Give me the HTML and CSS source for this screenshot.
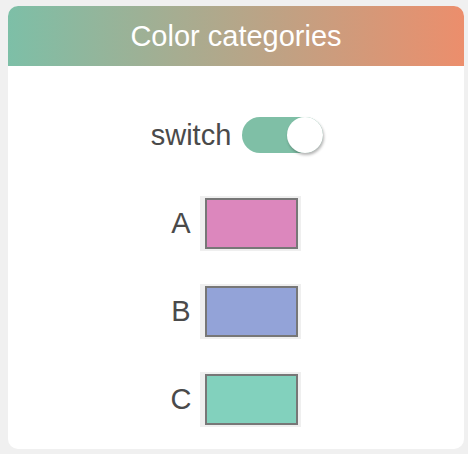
FILE: index.html
```html
<!DOCTYPE html>
<html lang="en">
<head>
<meta charset="utf-8">
<title>Color categories</title>
<link rel="stylesheet" href="styles.css">
</head>
<body>
<div class="card">
  <div class="card-header">Color categories</div>
  <div class="card-body">
    <div class="row switch-row">
      <span class="label">switch</span>
      <span class="toggle"><span class="knob"></span></span>
    </div>
    <div class="row color-row">
      <span class="label">A</span>
      <span class="color-input"><span class="swatch swatch-a"></span></span>
    </div>
    <div class="row color-row">
      <span class="label">B</span>
      <span class="color-input"><span class="swatch swatch-b"></span></span>
    </div>
    <div class="row color-row">
      <span class="label">C</span>
      <span class="color-input"><span class="swatch swatch-c"></span></span>
    </div>
  </div>
</div>
</body>
</html>
```
FILE: styles.css
```css
html, body {
  margin: 0;
  padding: 0;
  background: #f0f0f0;
}
body {
  padding: 6px 4px 5px 8px;
  font-family: "Liberation Sans", Arial, sans-serif;
}
.card {
  width: 456px;
  background: #ffffff;
  border-radius: 10px;
  overflow: hidden;
}
.card-header {
  height: 60px;
  line-height: 60px;
  text-align: center;
  color: #ffffff;
  font-size: 29px;
  background: linear-gradient(to right, #7dbfa7, #ec8e6c);
}
.card-body {
  display: flex;
  flex-direction: column;
  align-items: center;
  padding: 51px 0 22px;
}
.row {
  display: flex;
  align-items: center;
  gap: 10px;
}
.label {
  font-size: 29px;
  color: #4a4a4a;
}
.switch-row {
  height: 36px;
  margin-bottom: 43px;
  gap: 11px;
  padding-left: 2px;
}
.color-row {
  height: 55px;
  gap: 9px;
}
.color-row + .color-row {
  margin-top: 33px;
}
.toggle {
  position: relative;
  width: 81px;
  height: 36px;
  border-radius: 18px;
  background: #7fbfa6;
}
.knob {
  position: absolute;
  right: 0;
  top: 0;
  width: 36px;
  height: 36px;
  border-radius: 50%;
  background: #ffffff;
  box-shadow: 1px 2px 3px rgba(0, 0, 0, 0.3);
}
.color-input {
  display: flex;
  width: 101px;
  height: 55px;
  box-sizing: border-box;
  padding: 2px 3px 2px 5px;
  background: #efefef;
}
.swatch {
  flex: 1;
  border: 2px solid #777777;
}
.swatch-a { background: #dc87bd; }
.swatch-b { background: #93a3d8; }
.swatch-c { background: #82d1bd; }
```
